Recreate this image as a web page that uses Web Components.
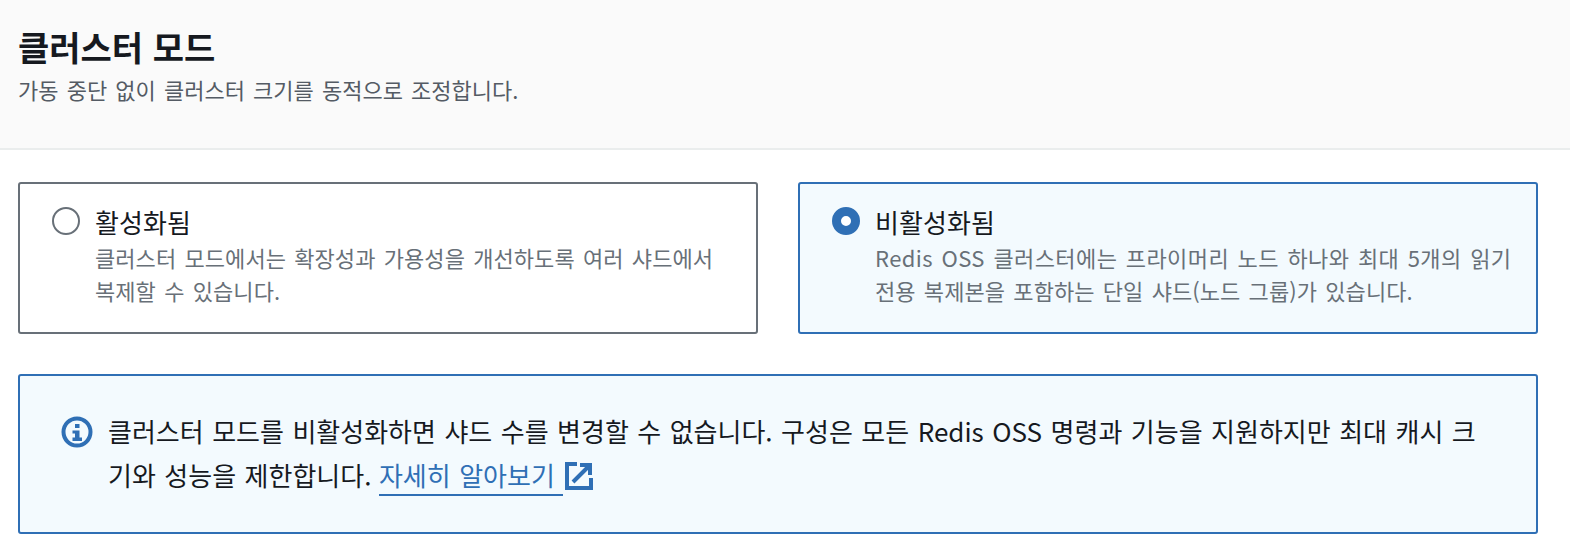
<!DOCTYPE html>
<html lang="ko">
<head>
<meta charset="utf-8">
<title>클러스터 모드</title>
<style>
html, body { margin: 0; padding: 0; background: #fff; }
body { font-family: "Noto Sans CJK KR", "Noto Sans", sans-serif; color: #16191f; }
</style>
</head>
<body>
<cluster-panel>
  <span slot="title">클러스터 모드</span>
  <span slot="description">가동 중단 없이 클러스터 크기를 동적으로 조정합니다.</span>
  <radio-card label="활성화됨">클러스터 모드에서는 확장성과 가용성을 개선하도록 여러 샤드에서<br>복제할 수 있습니다.</radio-card>
  <radio-card label="비활성화됨" checked><span style="letter-spacing:.4px">Redis OSS 클러스터에는 프라이머리 노드 하나와 최대 5개의 읽기</span><br>전용 복제본을 포함하는 단일 샤드(노드 그룹)가 있습니다.</radio-card>
  <info-alert slot="alert">클러스터 모드를 비활성화하면 샤드 수를 변경할 수 없습니다. 구성은 모든 Redis OSS 명령과 기능을 지원하지만 최대 캐시 크<br>기와 성능을 제한합니다. <ext-link>자세히 알아보기</ext-link></info-alert>
</cluster-panel>
<script>
const panelTemplate = document.createElement("template");
panelTemplate.innerHTML = `
<style>
	:host { display: block; height: 560px; box-sizing: border-box; }
	header {
		height: 150px;
		box-sizing: border-box;
		background: #fafafa;
		border-bottom: 2px solid #eaeded;
		padding: 22px 18px 0;
	}
	h2 { margin: 0; font-size: 34px; line-height: 50px; font-weight: 700; color: #16191f; }
	p { margin: 2px 0 0; font-size: 22px; line-height: 30px; word-spacing: 2px; color: #545b64; }
	.body { padding: 32px 32px 0 18px; display: flex; flex-direction: column; gap: 40px; }
	.cards { display: grid; grid-template-columns: minmax(0, 1fr) minmax(0, 1fr); gap: 40px; }
</style>
<header>
	<h2><slot name="title"></slot></h2>
	<p><slot name="description"></slot></p>
</header>
<div class="body">
	<div class="cards"><slot></slot></div>
	<slot name="alert"></slot>
</div>
`;

class ClusterPanel extends HTMLElement {
	constructor() {
		super();
		this.attachShadow({ mode: "open" });
		this.shadowRoot.appendChild(panelTemplate.content.cloneNode(true));
	}
}
customElements.define("cluster-panel", ClusterPanel);

const cardTemplate = document.createElement("template");
cardTemplate.innerHTML = `
<style>
	:host {
		display: flex;
		gap: 15px;
		height: 152px;
		box-sizing: border-box;
		padding: 22px 32px 0 32px;
		border: 2px solid #687078;
		border-radius: 3px;
		background: #fff;
	}
	:host([checked]) { border-color: #2f6fb5; background: #f3fafe; }
	.dot { flex: none; width: 28px; height: 28px; margin-top: 1px; }
	.label { font-size: 26px; line-height: 32px; letter-spacing: .1px; color: #16191f; }
	.text { margin-top: 3px; font-size: 22px; line-height: 33px; word-spacing: 2px; letter-spacing: .07px; color: #687078; white-space: nowrap; }
</style>
<svg class="dot" viewBox="0 0 28 28"></svg>
<div>
	<div class="label"></div>
	<div class="text"><slot></slot></div>
</div>
`;

class RadioCard extends HTMLElement {
	constructor() {
		super();
		this.attachShadow({ mode: "open" });
		this.shadowRoot.appendChild(cardTemplate.content.cloneNode(true));
	}
	connectedCallback() {
		this.shadowRoot.querySelector(".label").textContent = this.getAttribute("label");
		this.shadowRoot.querySelector(".dot").innerHTML = this.hasAttribute("checked")
			? '<circle cx="14" cy="14" r="9.500" fill="#fff" stroke="#2f6fb5" stroke-width="9"/>'
			: '<circle cx="14" cy="14" r="13" fill="#fff" stroke="#687078" stroke-width="2"/>';
	}
}
customElements.define("radio-card", RadioCard);

const alertTemplate = document.createElement("template");
alertTemplate.innerHTML = `
<style>
	:host {
		display: flex;
		gap: 15px;
		height: 160px;
		box-sizing: border-box;
		padding: 33px 40px 0 41px;
		border: 2px solid #2f6fb5;
		border-radius: 3px;
		background: #f3fafe;
	}
	svg { flex: none; width: 32px; height: 32px; margin-top: 7px; }
	.text { font-size: 26px; line-height: 44px; word-spacing: 1.200px; color: #16191f; white-space: nowrap; }
</style>
<svg viewBox="0 0 32 32">
	<circle cx="16" cy="16" r="13.500" fill="none" stroke="#2f6fb5" stroke-width="4"/>
	<rect x="14" y="8" width="4.500" height="4" fill="#2f6fb5"/>
	<path d="M11.500 14.500h7v7h2.500v3.500h-9.500v-3.500h2.500v-4h-2.500z" fill="#2f6fb5"/>
</svg>
<div class="text"><slot></slot></div>
`;

class InfoAlert extends HTMLElement {
	constructor() {
		super();
		this.attachShadow({ mode: "open" });
		this.shadowRoot.appendChild(alertTemplate.content.cloneNode(true));
	}
}
customElements.define("info-alert", InfoAlert);

const linkTemplate = document.createElement("template");
linkTemplate.innerHTML = `
<style>
	:host { display: inline; color: #2f6fb5; margin-left: -1px; }
	a { color: inherit; text-decoration: none; border-bottom: 2px solid #2f6fb5; padding-bottom: 1px; }
	svg { width: 30px; height: 30px; vertical-align: -5px; margin-left: 1px; }
</style>
<a href="#"><slot></slot>&nbsp;</a><svg viewBox="0 0 30 30" fill="none" stroke="#2f6fb5" stroke-width="4">
	<path d="M13 3H3v24h24V17"/>
	<path d="M9 21L25 5M16 4h10v10"/>
</svg>
`;

class ExtLink extends HTMLElement {
	constructor() {
		super();
		this.attachShadow({ mode: "open" });
		this.shadowRoot.appendChild(linkTemplate.content.cloneNode(true));
	}
}
customElements.define("ext-link", ExtLink);
</script>
</body>
</html>
